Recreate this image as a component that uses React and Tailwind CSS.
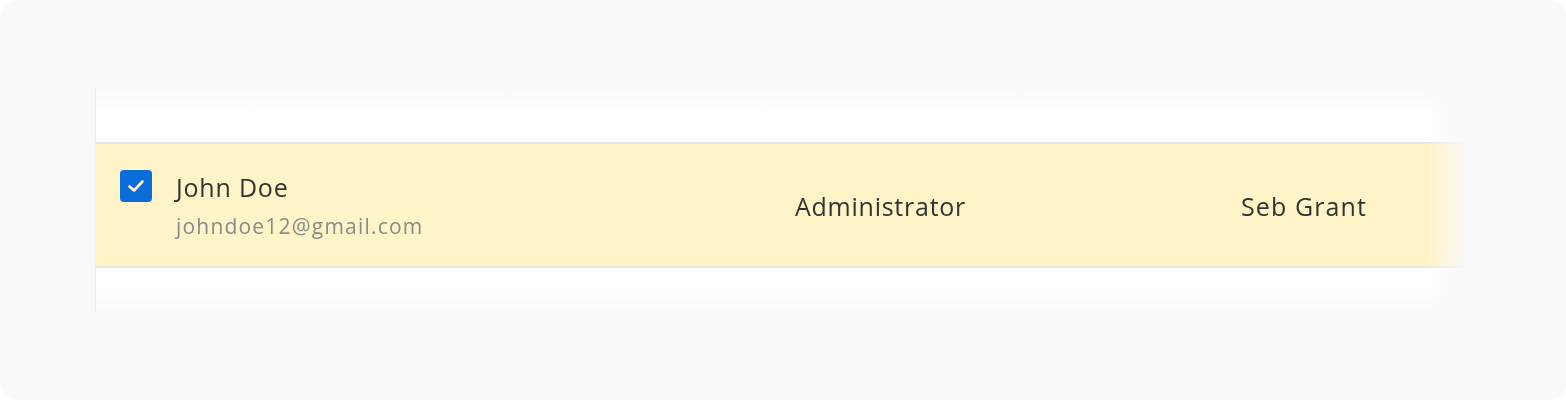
import React from "react";

export default function App() {
  return (
    <div className="bg-white w-[1566px] h-[400px]">
      <div className="w-[1566px] h-[400px] bg-[#f9f9f9] rounded-[18px] pt-[88px] pl-[95px]" style={{ fontFamily: "'Open Sans', 'Noto Sans', sans-serif" }}>
        <div className="w-[1372px] [mask-image:linear-gradient(to_right,black_97%,transparent)]">
          <div className="h-[54px] border-l border-[#ececec] bg-gradient-to-b from-[#f9f9f9] via-white to-white" />
          <div className="flex items-center h-[126px] bg-[#fff4c7] border-t-2 border-b-2 border-[#e6e6e6] pl-[25px]">
            <div className="flex items-start w-[675px]">
              <div className="w-[32px] h-[32px] rounded-[4px] bg-[#0a6cd9] flex items-center justify-center -mt-[1px]">
                <svg width="22" height="22" viewBox="0 0 22 22" fill="none">
                  <path d="M4.5 11.5 L9 15.5 L17.5 6.5" stroke="#fff4c7" strokeWidth="2.6" strokeLinecap="round" strokeLinejoin="round" />
                </svg>
              </div>
              <div className="ml-[24px] flex flex-col">
                <span className="text-[25px] leading-[32px] tracking-[0.8px] text-[#333333]">John Doe</span>
                <span className="text-[21px] leading-[28px] mt-[9px] tracking-[1.2px] text-[#8a8a8a]">johndoe12@gmail.com</span>
              </div>
            </div>
            <div className="w-[446px] mt-[3px] text-[25px] tracking-[0.75px] text-[#333333]">Administrator</div>
            <div className="mt-[3px] text-[25px] tracking-[1.1px] text-[#333333]">Seb Grant</div>
          </div>
          <div className="h-[44px] border-l border-[#ececec] bg-gradient-to-b from-white via-white to-[#f9f9f9]" />
        </div>
      </div>
    </div>
  );
}
